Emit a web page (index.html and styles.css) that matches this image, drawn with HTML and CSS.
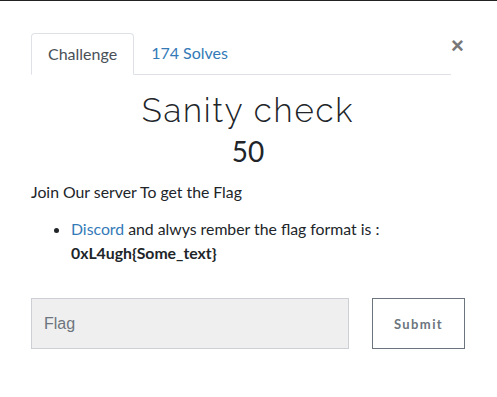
FILE: index.html
```html
<!DOCTYPE html>
<html>
<head>
<meta charset="utf-8">
<link rel="stylesheet" href="styles.css">
</head>
<body>
<div class="topline"></div>
<div class="modal">
  <div class="tabrow">
    <div class="tabs">
      <div class="tab active">Challenge</div>
      <div class="tab link">174 Solves</div>
    </div>
    <div class="close">&times;</div>
  </div>
  <h2 class="title">Sanity check</h2>
  <div class="points">50</div>
  <p class="desc">Join Our server To get the Flag</p>
  <ul class="list">
    <li><a class="blue">Discord</a> and alwys rember the flag format is :<br><b>0xL4ugh{Some_text}</b></li>
  </ul>
  <div class="form">
    <input class="flag" type="text" placeholder="Flag">
    <button class="submit">Submit</button>
  </div>
</div>
</body>
</html>
```
FILE: styles.css
```css
html, body { margin: 0; padding: 0; background: #fff; }
body { font-family: Lato, "Noto Sans", sans-serif; color: #212529; width: 497px; height: 397px; overflow: hidden; }
.topline { height: 1px; background: #222; }
.modal { padding: 32px 32px 0 31px; }
.tabrow { display: flex; align-items: flex-start; }
.tabs { display: flex; width: 420px; border-bottom: 1px solid #dee2e6; height: 41px; }
.tab { font-size: 16px; line-height: 20px; padding: 10px 16px 10px 16px; }
.tab.active { color: #495057; border: 1px solid #dee2e6; border-bottom: 1px solid #fff; border-radius: 4px 4px 0 0; margin-bottom: -1px; }
.tab.link { color: #337ab7; padding-left: 17px; }
.close { font-size: 22px; font-weight: 700; color: #777; line-height: 20px; margin-left: 0; margin-top: 3px; font-family: "Liberation Sans", sans-serif; }
.title { font-family: "Raleway", Lato, sans-serif; font-weight: 300; font-size: 33px; letter-spacing: 1.8px; text-align: center; margin: 16px 0 0; line-height: 40px; color: #212529; }
.points { text-align: center; font-size: 28px; line-height: 34px; margin-top: 3px; }
.desc { font-size: 15.8px; margin: 13px 0 0; line-height: 22px; }
.list { margin: 14px 0 0; padding-left: 40px; font-size: 15.8px; line-height: 24px; }
.blue { color: #337ab7; }
.form { display: flex; margin-top: 33px; }
.flag { width: 318px; height: 51px; box-sizing: border-box; background: #efefef; border: 1px solid #ccd0d5; padding: 0 12px; font-family: "Liberation Sans", sans-serif; font-size: 16px; outline: none; }
.flag::placeholder { color: #6c757d; }
.submit { margin-left: 23px; width: 93px; height: 51px; box-sizing: border-box; background: #fff; border: 1px solid #6c757d; color: #6c757d; font-family: Lato, sans-serif; font-weight: 700; font-size: 13px; letter-spacing: 1.4px; }
```
